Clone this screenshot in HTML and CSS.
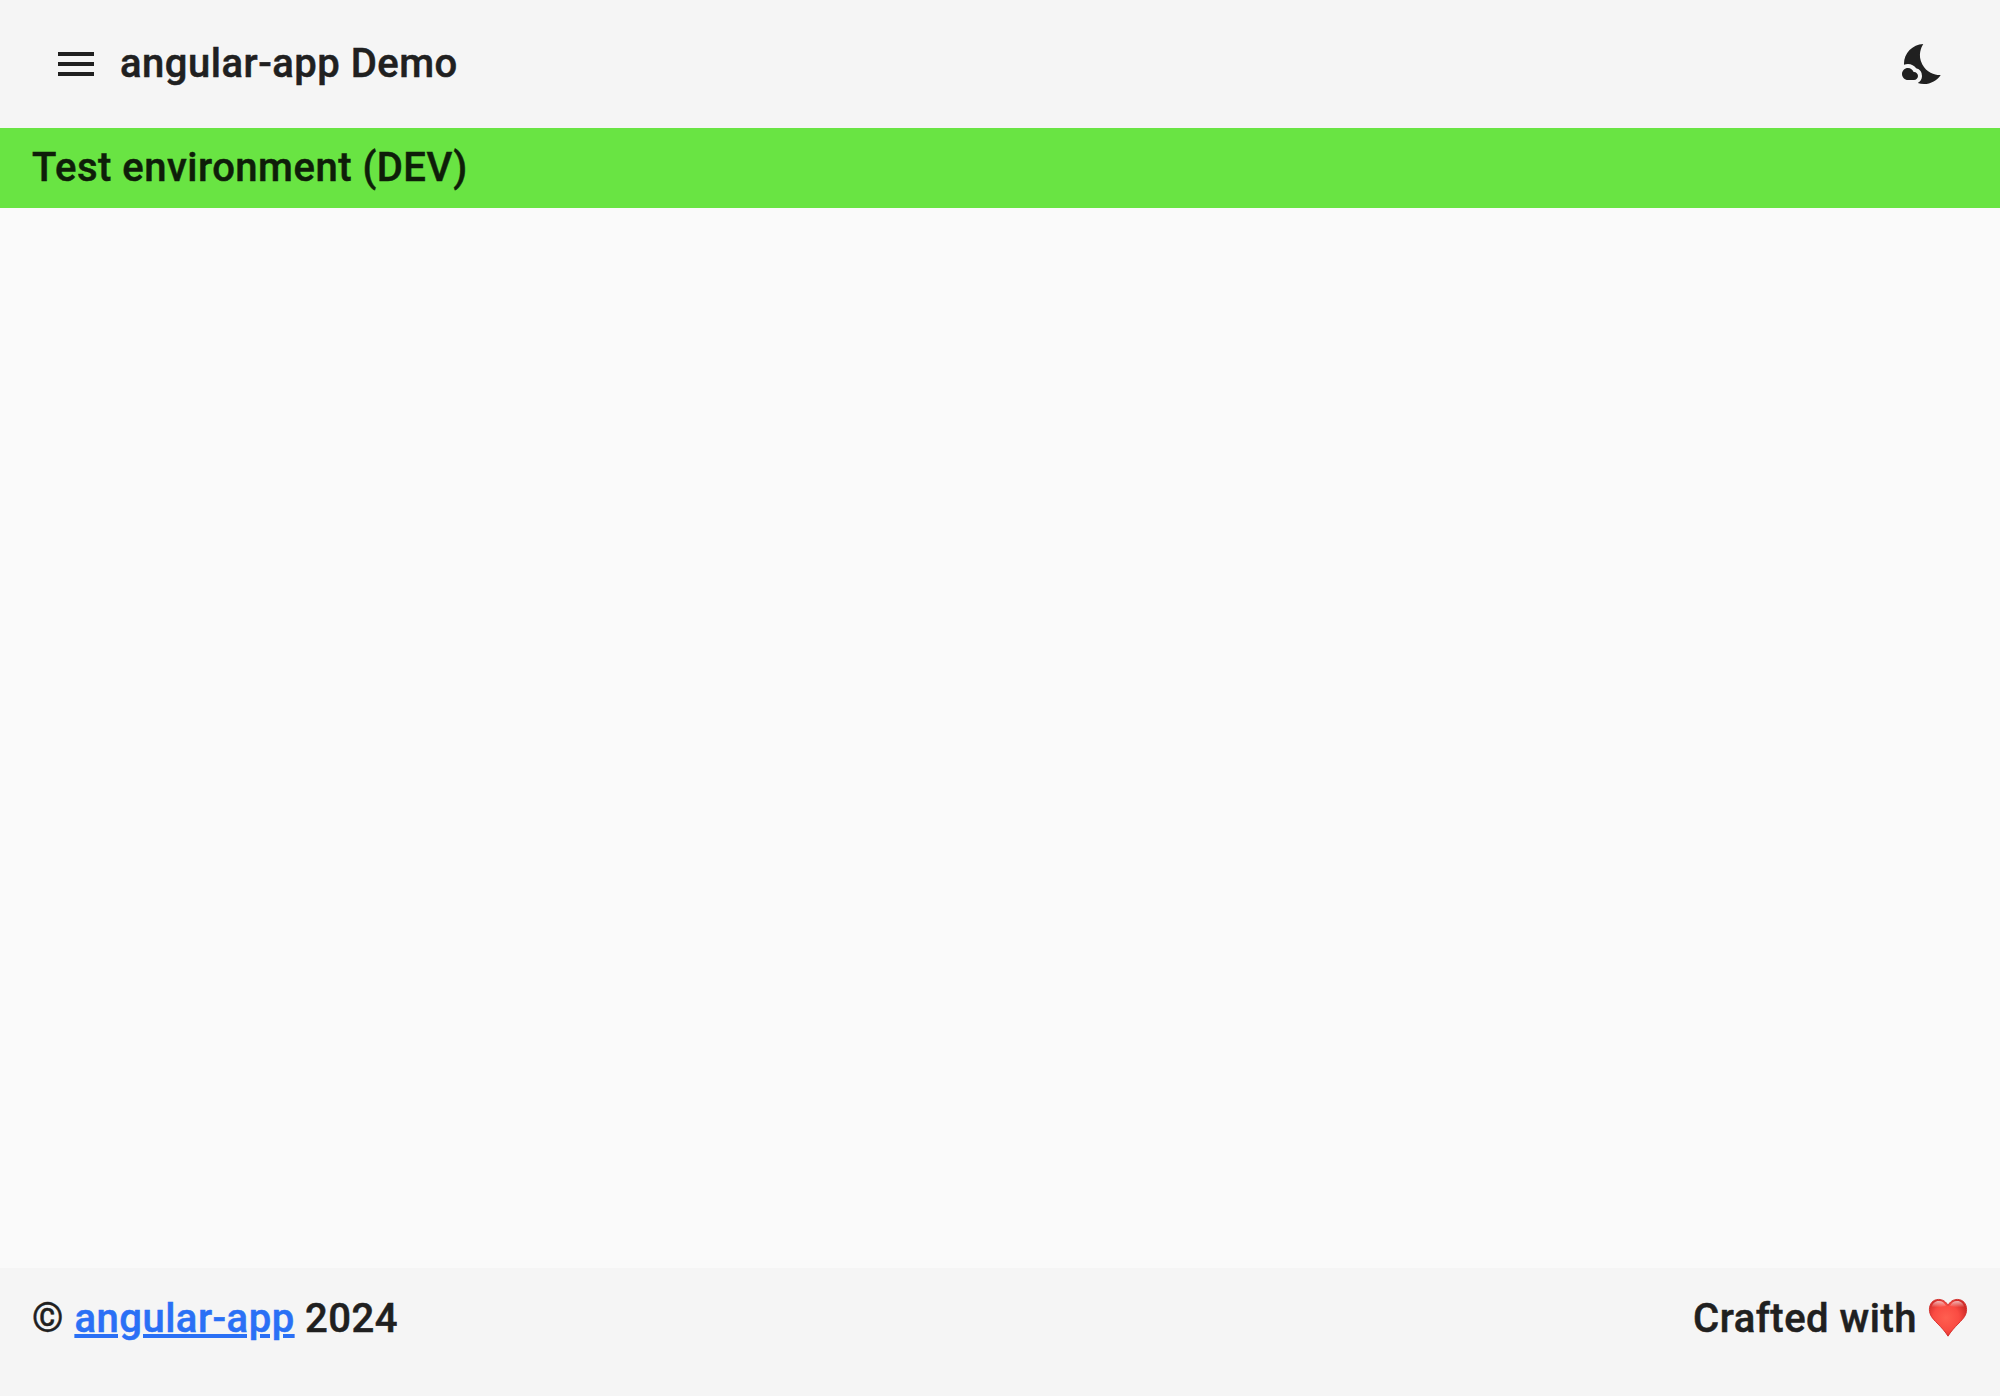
FILE: index.html
```html
<!DOCTYPE html>
<html lang="en">
<head>
<meta charset="utf-8">
<title>angular-app Demo</title>
<link rel="stylesheet" href="styles.css">
</head>
<body>
<header class="toolbar">
  <button class="icon-button" aria-label="Menu">
    <svg class="icon" viewBox="0 0 24 24"><path d="M3 18h18v-2H3v2zm0-5h18v-2H3v2zm0-7v2h18V6H3z"/></svg>
  </button>
  <span class="title">angular-app Demo</span>
  <button class="icon-button theme-button" aria-label="Toggle theme">
    <svg class="icon" viewBox="0 0 24 24"><path d="M11.1 12.08c-2.33-4.51-.5-8.48.53-10.07C6.27 2.2 1.98 6.59 1.98 12c0 .14.02.28.02.42.62-.27 1.29-.42 2-.42 1.66 0 3.18.83 4.1 2.15A4.01 4.01 0 0 1 11 18c0 1.52-.87 2.83-2.12 3.51.98.32 2.03.5 3.11.5 3.5 0 6.58-1.8 8.37-4.52-2.36.23-6.98-.97-9.26-5.41z"/><path d="M7 16h-.18C6.4 14.84 5.3 14 4 14c-1.66 0-3 1.34-3 3s1.34 3 3 3h3c1.1 0 2-.9 2-2s-.9-2-2-2z"/></svg>
  </button>
</header>
<div class="environment">Test environment (DEV)</div>
<main class="content"></main>
<footer class="footer">
  <span>© <a class="link" href="#">angular-app</a> 2024</span>
  <span class="credit">Crafted with
    <svg class="heart" viewBox="0 0 40 40" role="img" aria-label="love">
      <defs>
        <radialGradient id="heart-fill" cx=".45" cy=".5" r=".58"><stop offset="0" stop-color="#ff5f50"/><stop offset=".6" stop-color="#fa4b42"/><stop offset="1" stop-color="#cf2b28"/></radialGradient>
        <linearGradient id="heart-gloss" x1="0" y1="0" x2="0" y2="1"><stop offset="0" stop-color="#fff" stop-opacity=".65"/><stop offset="1" stop-color="#fff" stop-opacity="0"/></linearGradient>
      </defs>
      <path fill="url(#heart-fill)" stroke="#d22a27" stroke-width=".9" d="M20 38.200C17.500 34 13.500 29.500 9 25C4.500 20.500 1.400 17 1.400 11.500C1.400 5.500 5.200 1.400 10.600 1.400C14.800 1.400 18.200 3.700 20 7.500C21.800 3.700 25.200 1.400 29.400 1.400C34.800 1.400 38.600 5.500 38.600 11.500C38.600 17 35.500 20.500 31 25C26.500 29.500 22.500 34 20 38.200z"/>
      <path fill="url(#heart-gloss)" d="M3.800 9C4.500 5.200 7.200 2.900 10.800 2.900C14.200 2.900 16.800 4.700 18 8Q11 10 3.800 9zM36.200 9C35.500 5.200 32.800 2.900 29.200 2.900C25.800 2.900 23.200 4.700 22 8Q29 10 36.200 9z"/>
    </svg>
  </span>
</footer>
</body>
</html>
```
FILE: styles.css
```css
body {
  margin: 0;
  height: 100vh;
  display: flex;
  flex-direction: column;
  background: #fafafa;
  color: #202020;
  font: 500 40px/64px Roboto, sans-serif;
  letter-spacing: 0.5px;
  -webkit-text-stroke: 0.5px currentColor;
}

.toolbar {
  display: flex;
  align-items: center;
  height: 128px;
  box-sizing: border-box;
  padding: 0 32px;
  background: #f5f5f5;
}

.icon-button {
  display: flex;
  align-items: center;
  justify-content: center;
  width: 88px;
  height: 88px;
  padding: 0;
  border: 0;
  background: none;
  color: inherit;
}

.theme-button {
  margin-left: auto;
}

.icon {
  width: 48px;
  height: 48px;
  fill: currentColor;
}

.environment {
  height: 80px;
  padding: 0 32px;
  line-height: 80px;
  color: #0e1e09;
  background: #69e443;
}

.content {
  flex: 1;
}

.footer {
  display: flex;
  justify-content: space-between;
  align-items: flex-start;
  height: 128px;
  box-sizing: border-box;
  padding: 19px 32px 0;
  background: #f5f5f5;
}

.link {
  color: #2a70f5;
}

.credit {
  display: flex;
  align-items: center;
  gap: 11px;
}

.heart {
  width: 40px;
  height: 40px;
  margin-bottom: 2px;
}
```
